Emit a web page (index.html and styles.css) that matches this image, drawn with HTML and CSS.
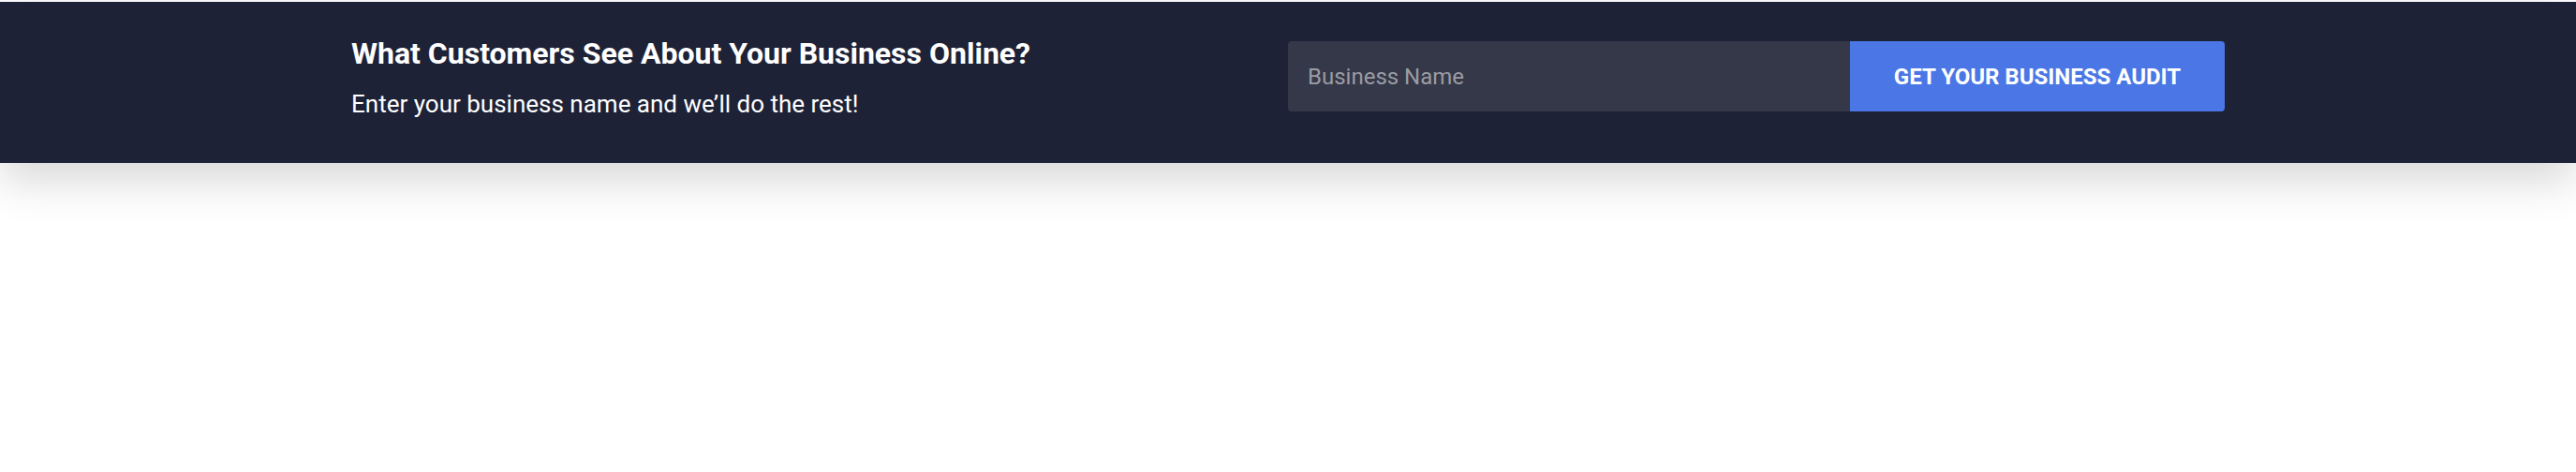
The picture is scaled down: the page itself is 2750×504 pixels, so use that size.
FILE: index.html
```html
<!DOCTYPE html>
<html lang="en">
<head>
<meta charset="utf-8">
<title>Business Audit</title>
<link rel="stylesheet" href="styles.css">
</head>
<body>
<section class="banner">
  <div class="inner">
    <div class="copy">
      <h2 class="title">What Customers See About Your Business Online?</h2>
      <p class="subtitle">Enter your business name and we’ll do the rest!</p>
    </div>
    <form class="audit-form">
      <input class="biz-input" type="text" placeholder="Business Name">
      <button class="audit-btn" type="button">GET YOUR BUSINESS AUDIT</button>
    </form>
  </div>
</section>
</body>
</html>
```
FILE: styles.css
```css
html, body {
  margin: 0;
  padding: 0;
  background: #ffffff;
}
body {
  padding-top: 2px;
  min-height: 400px;
  font-family: Roboto, "Liberation Sans", sans-serif;
}
.banner {
  position: relative;
  z-index: 1;
  background: #1e2237;
  height: 172px;
  box-sizing: border-box;
  box-shadow: 0 18px 45px rgba(0, 0, 0, 0.16);
}
.inner {
  width: 2000px;
  margin: 0 auto;
  display: flex;
  justify-content: space-between;
  align-items: flex-start;
  padding-top: 36px;
}
.title {
  margin: 0;
  font-size: 32px;
  font-weight: 700;
  line-height: 38px;
  color: #ffffff;
}
.subtitle {
  margin: 20px 0 0;
  font-size: 26px;
  font-weight: 400;
  line-height: 30px;
  color: #ffffff;
}
.audit-form {
  display: flex;
  margin: 6px 0 0;
}
.biz-input {
  width: 600px;
  height: 75px;
  box-sizing: border-box;
  border: none;
  outline: none;
  background: #343849;
  border-radius: 4px 0 0 4px;
  padding: 0 21px;
  font-family: Roboto, "Liberation Sans", sans-serif;
  font-size: 24px;
  color: #ffffff;
}
.biz-input::placeholder {
  color: #9a9ca4;
}
.audit-btn {
  width: 400px;
  height: 75px;
  border: none;
  background: #4a77e5;
  border-radius: 0 4px 4px 0;
  color: #ffffff;
  font-family: Roboto, "Liberation Sans", sans-serif;
  font-size: 24px;
  font-weight: 700;
  padding: 0;
  cursor: pointer;
}
```
